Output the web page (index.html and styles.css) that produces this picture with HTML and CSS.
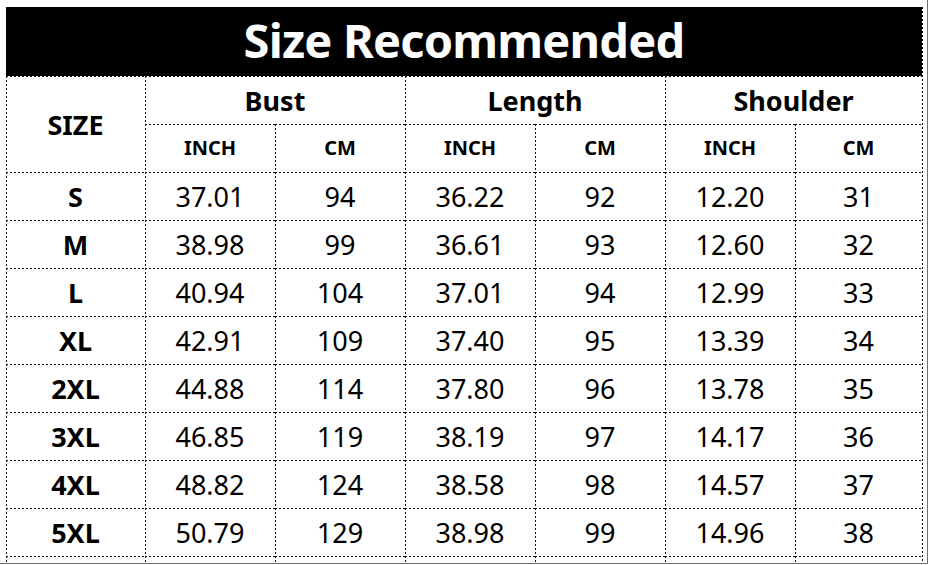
FILE: index.html
```html
<!DOCTYPE html>
<html>
<head>
<meta charset="utf-8">
<link rel="stylesheet" href="styles.css">
</head>
<body>
<div class="frame">
  <div class="chart">
    <div class="title">Size Recommended</div>
    <div class="cell size-head">SIZE</div>
    <div class="cell group">Bust</div>
    <div class="cell group">Length</div>
    <div class="cell group">Shoulder</div>
    <div class="cell unit">INCH</div><div class="cell unit">CM</div>
    <div class="cell unit">INCH</div><div class="cell unit">CM</div>
    <div class="cell unit">INCH</div><div class="cell unit">CM</div>

    <div class="cell label">S</div><div class="cell num">37.01</div><div class="cell num">94</div><div class="cell num">36.22</div><div class="cell num">92</div><div class="cell num">12.20</div><div class="cell num">31</div>
    <div class="cell label">M</div><div class="cell num">38.98</div><div class="cell num">99</div><div class="cell num">36.61</div><div class="cell num">93</div><div class="cell num">12.60</div><div class="cell num">32</div>
    <div class="cell label">L</div><div class="cell num">40.94</div><div class="cell num">104</div><div class="cell num">37.01</div><div class="cell num">94</div><div class="cell num">12.99</div><div class="cell num">33</div>
    <div class="cell label">XL</div><div class="cell num">42.91</div><div class="cell num">109</div><div class="cell num">37.40</div><div class="cell num">95</div><div class="cell num">13.39</div><div class="cell num">34</div>
    <div class="cell label">2XL</div><div class="cell num">44.88</div><div class="cell num">114</div><div class="cell num">37.80</div><div class="cell num">96</div><div class="cell num">13.78</div><div class="cell num">35</div>
    <div class="cell label">3XL</div><div class="cell num">46.85</div><div class="cell num">119</div><div class="cell num">38.19</div><div class="cell num">97</div><div class="cell num">14.17</div><div class="cell num">36</div>
    <div class="cell label">4XL</div><div class="cell num">48.82</div><div class="cell num">124</div><div class="cell num">38.58</div><div class="cell num">98</div><div class="cell num">14.57</div><div class="cell num">37</div>
    <div class="cell label">5XL</div><div class="cell num">50.79</div><div class="cell num">129</div><div class="cell num">38.98</div><div class="cell num">99</div><div class="cell num">14.96</div><div class="cell num">38</div>
    <div class="cell"></div><div class="cell"></div><div class="cell"></div><div class="cell"></div><div class="cell"></div><div class="cell"></div><div class="cell"></div>
  </div>
</div>
</body>
</html>
```
FILE: styles.css
```css
html, body {
  margin: 0;
  padding: 0;
  background: #fff;
  overflow: hidden;
}
.frame {
  box-sizing: border-box;
  width: 928px;
  height: 564px;
  border-right: 1px solid #707070;
  border-bottom: 1px solid #707070;
  padding: 7px 0 0 6px;
  overflow: hidden;
  font-family: "Noto Sans", "Open Sans", sans-serif;
  color: #000;
}
.chart {
  display: grid;
  grid-template-columns: 139px 130px 130px 130px 130px 130px 127px;
  grid-template-rows: 69px repeat(10, 48px) 48px;
  width: 916px;
  padding-right: 1px;
  background-image: repeating-linear-gradient(to bottom, #111 0 2px, transparent 2px 4px);
  background-size: 1px 100%;
  background-position: right top;
  background-repeat: no-repeat;
}
.title {
  grid-column: 1 / 8;
  background: #000;
  color: #fff;
  font-weight: 700;
  font-size: 47px;
  letter-spacing: -0.8px;
  display: flex;
  align-items: center;
  justify-content: center;
  line-height: 1;
  padding-bottom: 2px;
}
.cell {
  display: flex;
  align-items: center;
  justify-content: center;
  line-height: 1;
  background-image:
    repeating-linear-gradient(to right, #111 0 2px, transparent 2px 4px),
    repeating-linear-gradient(to bottom, #111 0 2px, transparent 2px 4px);
  background-size: 100% 1px, 1px 100%;
  background-position: left top, left top;
  background-repeat: no-repeat;
}
.size-head {
  grid-row: span 2;
  font-weight: 700;
  font-size: 27px;
}
.group {
  grid-column: span 2;
  font-weight: 700;
  font-size: 27px;
}
.unit {
  font-weight: 700;
  font-size: 20px;
}
.label {
  font-weight: 700;
  font-size: 27px;
}
.num {
  font-size: 27px;
}
```
